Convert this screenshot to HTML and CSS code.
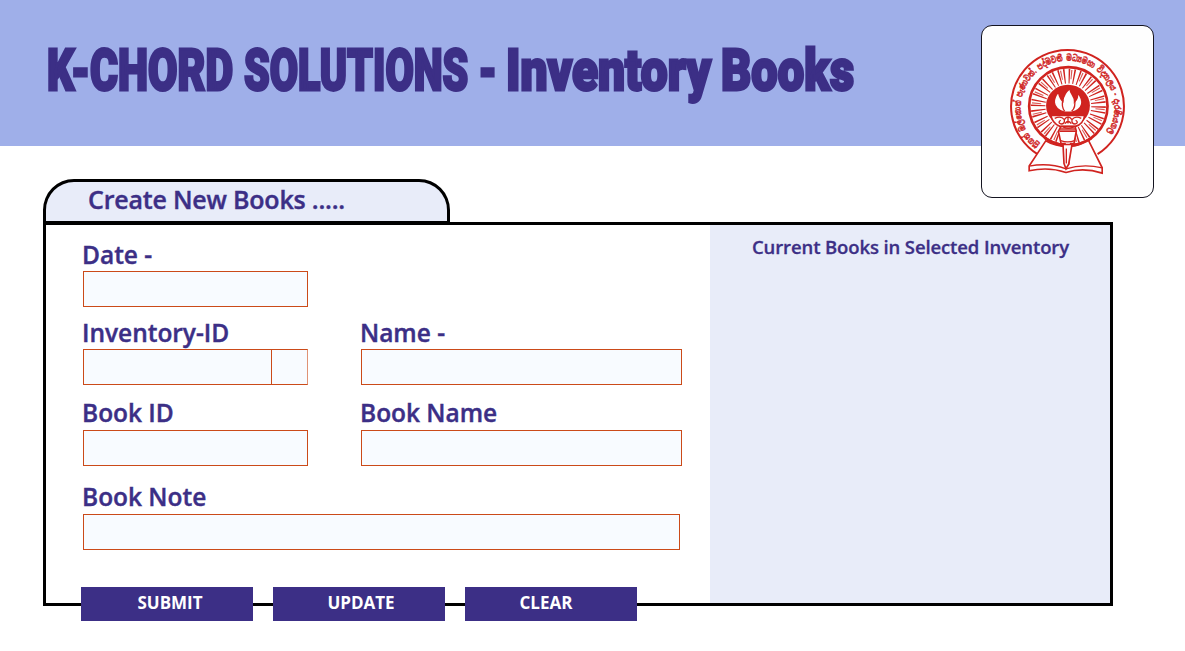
FILE: index.html
```
<!DOCTYPE html>
<html lang="en">
<head>
<meta charset="utf-8">
<title>K-CHORD SOLUTIONS - Inventory Books</title>
<link rel="stylesheet" href="styles.css">
</head>
<body>
<header class="banner">
  <svg class="title" viewBox="0 0 820 70" role="heading" aria-level="1">
    <g transform="scale(1 1.3)">
      <text x="2" y="38.3" textLength="186" lengthAdjust="spacingAndGlyphs">K-CHORD</text>
      <text x="199" y="38.3" textLength="253" lengthAdjust="spacingAndGlyphs">SOLUTIONS -</text>
      <text x="461" y="38.3" textLength="205" lengthAdjust="spacingAndGlyphs">Inventory</text>
      <text x="676" y="38.3" textLength="133" lengthAdjust="spacingAndGlyphs">Books</text>
    </g>
  </svg>
  <div class="crest">
    <svg class="emblem" viewBox="20 16 515 515">
      <defs>
        <path id="motto" d="M192 374 A141 141 0 1 1 373 366"/>
      </defs>
      <path class="ln" d="M187 402 A170 170 0 1 1 368 402"/>
      <circle class="ring" cx="280" cy="258" r="118"/>
      <circle class="rays" cx="280" cy="258" r="91"/>
      <circle class="rays short" cx="280" cy="258" r="96"/>
      <ellipse class="solid" cx="279" cy="256" rx="66" ry="63"/>
      <text class="motto"><textPath href="#motto" textLength="650" lengthAdjust="spacingAndGlyphs">සුගත් ඔල්කොත් පැණාවත්. පද්මවතී මධ්‍යමහා විද්‍යාලය - දැරණියගල</textPath></text>
      <path class="page" d="M212 362 L162 438 V452 Q220 439 273 457 Q325 441 382 459 V443 L340 359 Q310 379 280 379 Q240 379 212 362Z"/>
      <path class="thin" d="M162 438 Q222 427 273 446 Q325 430 382 443"/>
      <path class="ring" d="M208 352 Q240 376 280 376 Q318 376 350 353"/>
      <path class="flame" d="M268 276 C226 262 234 232 252 212 C250 228 258 236 263 242 C265 224 275 212 285 204 C286 222 300 226 299 244 C306 237 309 227 307 215 C330 241 325 268 290 276Z"/>
      <path class="thin" d="M264 239 Q258 258 269 273 M299 239 Q303 260 290 273"/>
      <path class="bowl" d="M227 281 H330 Q326 313 300 319 H256 Q230 309 227 281Z"/>
      <path class="solid" d="M227 278 H331 V288 H227Z"/>
      <path class="thin" d="M239 294 Q258 285 268 298 Q270 312 257 311 Q247 306 257 300 M319 294 Q301 285 291 298 Q289 312 302 311 Q312 306 302 300 M268 298 Q279 281 291 298 M279 291 V310 M270 310 Q279 297 289 310"/>
      <path class="page" d="M258 318 H300 L304 332 L297 370 H287 L281 432 Q274 440 269 430 L270 370 H258 L250 333Z"/>
      <path class="thin" d="M253 333 H304 M257 361 Q278 369 299 361 M264 320 Q279 328 297 320"/>
      <path class="torch" d="M264 373 H291 L281 432 L273 446 L267 430Z"/>
      <path class="thin" d="M274 385 V430"/>
      <path class="shade" d="M256 322 H302 V331 H254Z"/>
    </svg>
  </div>
</header>
<main class="board">
  <h2 class="tab">Create New Books .....</h2>
  <section class="panel">
    <form class="form">
      <div class="field date"><label for="date">Date -</label><input id="date"></div>
      <div class="field"><label for="inv">Inventory-ID</label><div class="combo"><input id="inv"><button type="button" aria-label="Choose inventory"></button></div></div>
      <div class="field"><label for="name">Name -</label><input id="name"></div>
      <div class="field third"><label for="bid">Book ID</label><input id="bid"></div>
      <div class="field third"><label for="bname">Book Name</label><input id="bname"></div>
      <div class="field note"><label for="note">Book Note</label><input id="note"></div>
      <div class="actions">
        <button type="button">SUBMIT</button>
        <button type="button">UPDATE</button>
        <button type="button" class="clear">CLEAR</button>
      </div>
    </form>
    <aside class="current"><h3>Current Books in Selected Inventory</h3></aside>
  </section>
</main>
</body>
</html>
```
FILE: styles.css
```
* { box-sizing: border-box; }
body { margin: 0; height: 651px; background: #fff; color: #3c2f86; font-family: "Open Sans", "Noto Sans", sans-serif; overflow: hidden; }
h2, h3 { margin: 0; }
.banner { display: flex; justify-content: space-between; align-items: flex-start; height: 146px; padding: 25px 31px 0 45px; background: #9fafe9; }
.title { width: 820px; height: 70px; margin-top: 15px; overflow: visible; }
.title text { font: 900 44.5px Roboto, sans-serif; fill: #3c2f86; stroke: #3c2f86; stroke-width: 2.2px; }
.crest { flex: none; width: 173px; height: 173px; border: 1px solid #141420; border-radius: 11px; background: #fefefe; }
.emblem { display: block; width: 171px; height: 171px; }
.ln, .thin, .ring, .rays, .bowl { fill: none; stroke: #d0231f; }
.ln { stroke-width: 6; }
.thin { stroke-width: 4; }
.ring { stroke-width: 8; }
.rays { stroke-width: 44; stroke-dasharray: 4 10.3; }
.rays.short { stroke-width: 28; stroke-dasharray: 3.4 26.76; stroke-dashoffset: -7; opacity: .75; }
.solid { fill: #d0231f; }
.flame, .page, .torch { fill: #fefefe; stroke: #d0231f; stroke-width: 5; }
.bowl { fill: #fefefe; stroke-width: 5; }
.shade { fill: #d0231f; opacity: .75; }
.motto { font: 700 27px "Noto Sans Sinhala", "Noto Sans", sans-serif; fill: #d0231f; stroke: #d0231f; stroke-width: 1.2px; }
.board { padding: 33px 72px 0 43px; }
.tab { width: 407px; height: 46px; padding: 2px 0 0 42px; border: 3px solid #000; border-bottom-width: 4px; border-radius: 31px 31px 0 0; background: #e8ecf9; font-size: 25px; line-height: 30px; font-weight: 600; letter-spacing: -.2px; white-space: nowrap; -webkit-text-stroke: .4px #3c2f86; }
.panel { display: flex; justify-content: space-between; height: 384px; margin-top: -3px; border: 3px solid #000; }
.form { display: grid; grid-template-columns: 225px 321px; grid-template-rows: 84px 78px 81px 84px 69px; column-gap: 53px; width: 640px; padding-left: 37px; }
.field { display: flex; flex-direction: column; justify-content: flex-end; padding-bottom: 2px; }
.date, .note, .actions { grid-column: 1 / -1; }
.note { width: 597px; }
label { height: 31px; margin-left: -1px; font-size: 24.5px; line-height: 30px; font-weight: 600; letter-spacing: -.02px; white-space: nowrap; -webkit-text-stroke: .4px #3c2f86; }
.third label, .note label { height: 32px; }
input { width: 100%; height: 36px; padding: 0 8px; border: 1px solid #cb4a19; border-radius: 0; background: #f8fbff; font: 18px "Open Sans", sans-serif; color: #3c2f86; }
.date input { width: 225px; }
.combo { display: flex; width: 225px; }
.combo input { width: 189px; }
.combo button { width: 36px; height: 36px; padding: 0; border: 1px solid #cb4a19; border-left: 0; border-right-color: #df9275; background: #f8fbff; }
.actions { display: flex; gap: 20px; align-items: flex-end; margin-left: -2px; }
.actions button { width: 172px; height: 34px; padding: 0 0 3px 6px; border: 0; background: #3c2f86; color: #fff; font: 700 17px "Open Sans", sans-serif; }
.actions button:nth-child(2) { padding-left: 4px; }
.actions .clear { padding: 0 10px 3px 0; }
.current { width: 400px; padding-top: 9px; background: #e8ecf9; }
.current h3 { margin-left: 42px; font-size: 18.5px; line-height: 26px; font-weight: 600; letter-spacing: -.12px; white-space: nowrap; -webkit-text-stroke: .3px #3c2f86; }
```
